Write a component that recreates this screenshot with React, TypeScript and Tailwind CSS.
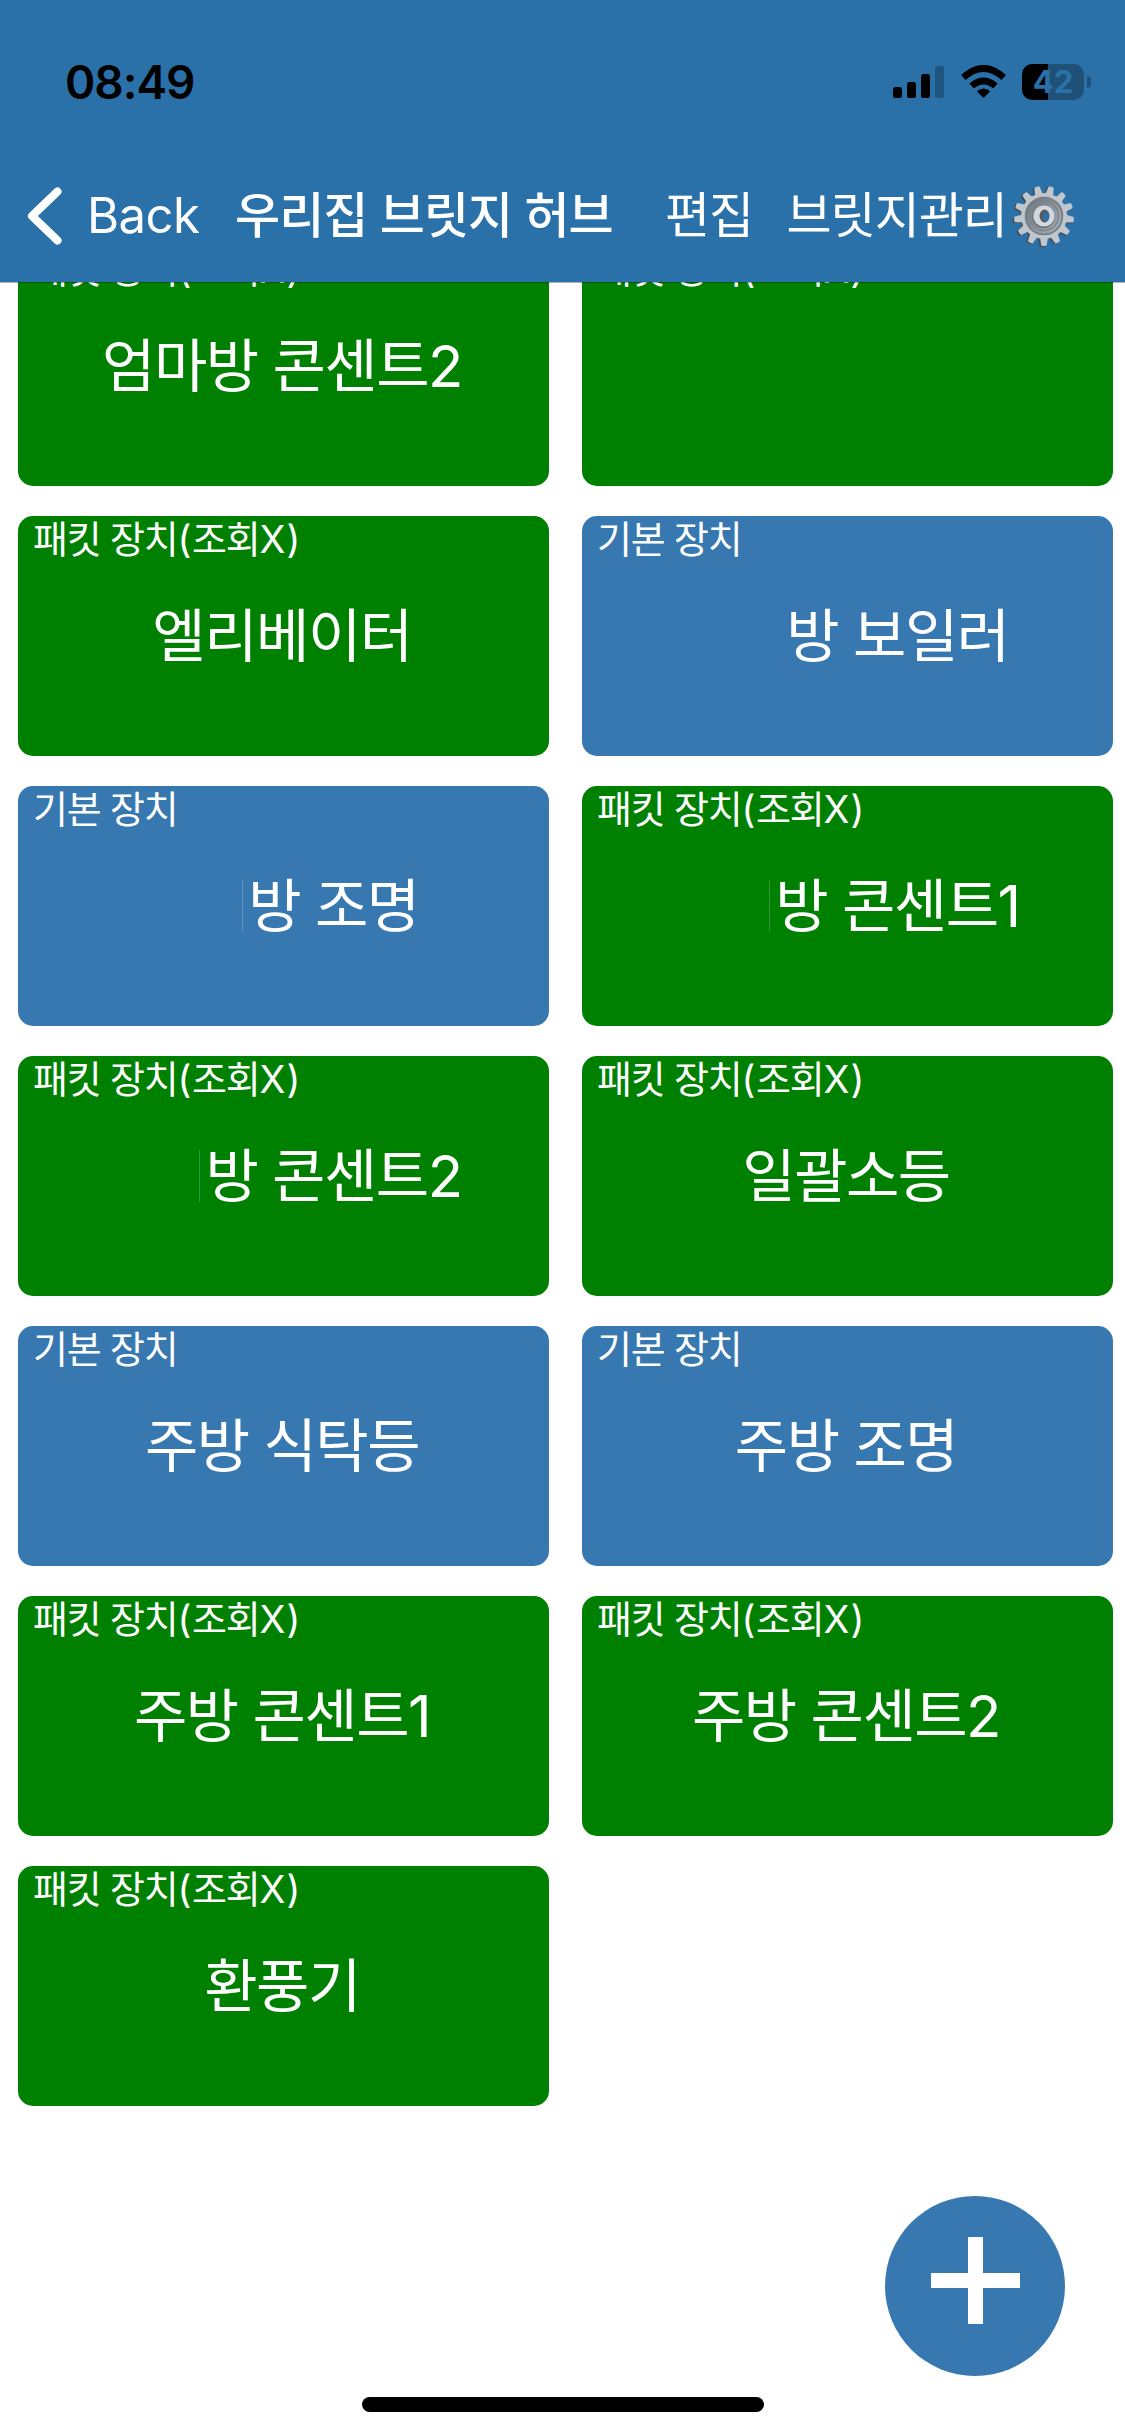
import React from "react";

type Device = { name: string; kind: "packet" | "basic"; masked?: "plain" | "edge" };

const devices: Device[] = [
  { name: "엄마방 콘센트2", kind: "packet" },
  { name: "", kind: "packet" },
  { name: "엘리베이터", kind: "packet" },
  { name: "방 보일러", kind: "basic", masked: "plain" },
  { name: "방 조명", kind: "basic", masked: "edge" },
  { name: "방 콘센트1", kind: "packet", masked: "edge" },
  { name: "방 콘센트2", kind: "packet", masked: "edge" },
  { name: "일괄소등", kind: "packet" },
  { name: "주방 식탁등", kind: "basic" },
  { name: "주방 조명", kind: "basic" },
  { name: "주방 콘센트1", kind: "packet" },
  { name: "주방 콘센트2", kind: "packet" },
  { name: "환풍기", kind: "packet" },
];

function DeviceCard({ name, kind, masked }: Device) {
  const packet = kind === "packet";
  return (
    <div
      className={
        "relative flex h-[240px] items-center justify-center rounded-[15px] text-white " +
        (packet ? "bg-[#008000]" : "bg-[#3878b0]")
      }
    >
      <span className="absolute left-[15px] top-[2.5px] whitespace-nowrap text-[38px] leading-[40px] tracking-[-1.2px]">
        {packet ? (
          <>
            패킷 장치<span className="tracking-[0.5px]">(</span>조회<span className="tracking-[1.2px]">X)</span>
          </>
        ) : (
          "기본 장치"
        )}
      </span>
      <div className="flex items-center whitespace-nowrap pb-[1px] pr-[3px] text-[58px] leading-[60px] tracking-[-1.5px]">
        {masked && (
          <span className="flex h-[52px] w-[103px] justify-end pr-[5px]">
            {masked === "edge" && <span className="h-full w-px bg-white/20" />}
          </span>
        )}
        <span>{name}</span>
      </div>
    </div>
  );
}

function Gear() {
  const teeth = Array.from({ length: 13 }, (_, i) => (i * 360) / 13 + 14);
  return (
    <svg className="h-[62px] w-[62px]" viewBox="0 0 62 62">
      <defs>
        <linearGradient id="dish" x1="0" y1="0" x2="1" y2="1">
          <stop offset="0" stopColor="#68737c" />
          <stop offset="1" stopColor="#aab0b8" />
        </linearGradient>
      </defs>
      <g fill="#4a4947" transform="translate(-1.6 .8)">
        {teeth.map((a) => (
          <path key={a} d="M27 10 L28.3 1.4 Q31 .4 33.7 1.4 L35 10Z" transform={`rotate(${a} 31 31)`} />
        ))}
        <circle cx="31" cy="31" r="22.5" />
      </g>
      <g fill="#c0c6ce">
        {teeth.map((a) => (
          <path key={a} d="M27 10 L28.3 1.4 Q31 .4 33.7 1.4 L35 10Z" transform={`rotate(${a} 31 31)`} />
        ))}
        <circle cx="31" cy="31" r="23" />
      </g>
      <circle cx="31" cy="31" r="18.5" fill="url(#dish)" stroke="#747d86" strokeWidth="1.6" />
      <circle cx="31" cy="31" r="14.5" fill="none" stroke="#7d868f" strokeWidth="1.4" />
      <circle cx="30.5" cy="32" r="11.2" fill="#6f7073" />
      <circle cx="31" cy="31" r="10.6" fill="#d3d7df" />
      <ellipse cx="31.5" cy="31" rx="5" ry="6.4" fill="#5a5c60" />
      <ellipse cx="33" cy="31.5" rx="2.8" ry="4.6" fill="#2a71a9" />
    </svg>
  );
}

export default function App() {
  return (
    <div className="relative flex h-[2436px] w-[1125px] flex-col overflow-hidden bg-white font-['Inter','Noto_Sans_CJK_KR',sans-serif]">
      <header className="relative z-10 flex h-[282px] shrink-0 flex-col bg-[#2a71a9] shadow-[0_1px_0_rgba(0,0,0,0.3)]">
        <div className="flex h-[150px] items-start justify-between pl-[65px] pr-[34px] pt-[57px]">
          <span className="text-[46px] font-semibold leading-[50px] tracking-[-1px] text-black">08:49</span>
          <div className="flex items-center pt-[7px]">
            <svg className="h-[34px] w-[51px]" viewBox="0 0 51 34">
              <rect x="0" y="22" width="9" height="11" rx="2.6" />
              <rect x="14" y="17" width="9" height="16" rx="2.6" />
              <rect x="28" y="9" width="9" height="24" rx="2.6" />
              <rect x="42" y="1" width="9" height="32" rx="2.6" fillOpacity=".25" />
            </svg>
            <svg className="ml-[16px] h-[34px] w-[47px]" viewBox="0 0 47 34">
              <path d="M23.500 33 L16.800 26.300 Q23.500 20.700 30.200 26.300Z" strokeLinejoin="round" />
              <path d="M11.600 21 Q23.500 11 35.400 21" fill="none" stroke="#000" strokeWidth="6.800" />
              <path d="M3.300 12.600 Q23.500 -5.800 43.700 12.600" fill="none" stroke="#000" strokeWidth="6.800" />
            </svg>
            <div className="ml-[15px] flex items-center">
              <div className="flex h-[36px] w-[62px] items-center justify-center rounded-[10px] bg-[linear-gradient(90deg,#000_26px,#1f5077_26px)] text-[31px] font-bold leading-[36px] text-[#2a71a9]">
                42
              </div>
              <div className="ml-[3px] h-[12px] w-[4px] rounded-r-full bg-[#1f5077]" />
            </div>
          </div>
        </div>
        <nav className="flex h-[132px] items-center whitespace-nowrap pl-[27px] text-[49px] leading-[60px] tracking-[-1px] text-white">
          <svg className="h-[58px] w-[35px] shrink-0" viewBox="0 0 35 58">
            <path d="M30.500 4.500 L5 29 L30.500 53.500" fill="none" stroke="#fff" strokeWidth="8" strokeLinecap="round" strokeLinejoin="round" />
          </svg>
          <span className="ml-[25px] w-[148px] tracking-[-0.5px]">Back</span>
          <span className="w-[430px] font-medium tracking-[-0.9px]">우리집 브릿지 허브</span>
          <span className="w-[121.500px]">편집</span>
          <span className="w-[226px]">브릿지관리</span>
          <Gear />
        </nav>
      </header>
      <main className="-mt-[36px] grid grid-cols-[531px_531px] gap-x-[33px] gap-y-[30px] pl-[18px]">
        {devices.map((d, i) => (
          <DeviceCard key={i} {...d} />
        ))}
      </main>
      <button className="absolute left-[885px] top-[2196px] flex h-[180px] w-[180px] items-center justify-center rounded-full bg-[#3878b0]" aria-label="추가">
        <svg className="h-[180px] w-[180px]" viewBox="0 0 180 180">
          <path d="M83 41h15v36h37v15H98v36H83V92H46V77h37z" fill="#fff" />
        </svg>
      </button>
      <div className="absolute left-[362px] top-[2397px] h-[15px] w-[402px] rounded-full bg-black" />
    </div>
  );
}
